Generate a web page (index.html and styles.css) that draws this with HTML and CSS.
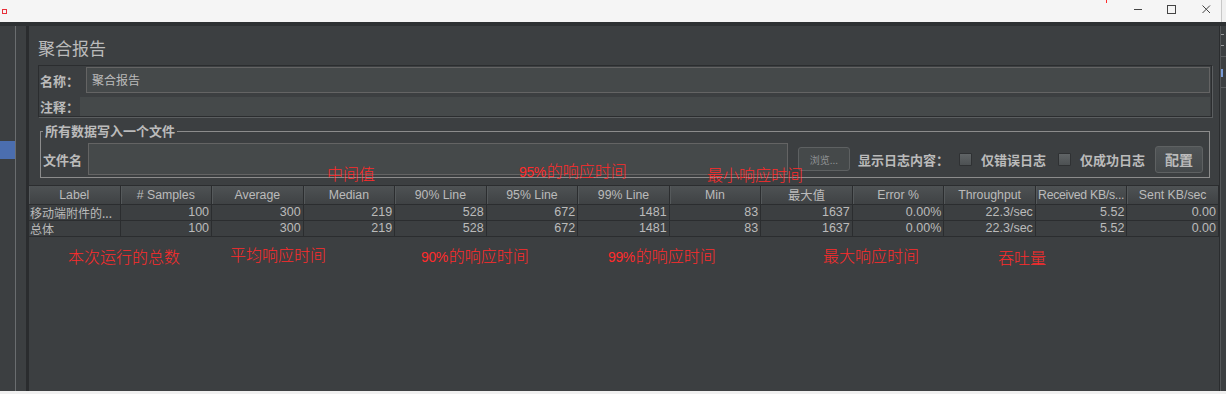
FILE: index.html
```html
<!DOCTYPE html>
<html lang="zh-CN">
<head>
    <meta charset="UTF-8">
    <title>聚合报告</title>
    <link rel="stylesheet" href="styles.css">
</head>
<body>
    <div class="titlebar">
        <span class="app-icon"></span>
        <div class="win-controls">
            <svg class="win-btn" width="10" height="10" viewBox="0 0 10 10"><line x1="1" y1="5.5" x2="9" y2="5.5"/></svg>
            <svg class="win-btn max" width="10" height="10" viewBox="0 0 10 10"><rect x="1.5" y="1.5" width="8" height="8"/></svg>
            <svg class="win-btn close" width="10" height="10" viewBox="0 0 10 10"><line x1="1.5" y1="1.5" x2="9" y2="9"/><line x1="9" y1="1.5" x2="1.5" y2="9"/></svg>
        </div>
    </div>

    <div class="workspace">
        <div class="tree">
            <div class="tree-selected"></div>
        </div>
        <div class="splitter"></div>

        <div class="main">
            <div class="config">
                <div class="panel-title">聚合报告</div>

                <div class="name-box">
                    <div class="name-row">
                        <span class="field-label name-label">名称：</span>
                        <div class="text-field">聚合报告</div>
                    </div>
                    <div class="comment-row">
                        <span class="field-label comment-label">注释：</span>
                        <div class="comment-field"></div>
                    </div>
                </div>

                <fieldset class="file-group">
                    <legend>所有数据写入一个文件</legend>
                    <div class="file-row">
                        <span class="field-label file-label">文件名</span>
                        <div class="file-field"></div>
                        <button class="browse-btn">浏览...</button>
                        <span class="field-label log-label">显示日志内容：</span>
                        <span class="check"><span class="check-box"></span>仅错误日志</span>
                        <span class="check second"><span class="check-box"></span>仅成功日志</span>
                        <button class="config-btn">配置</button>
                    </div>
                </fieldset>
            </div>

            <div class="table-pane">
                <table class="report">
                    <thead>
                        <tr>
                            <th>Label</th>
                            <th># Samples</th>
                            <th>Average</th>
                            <th>Median</th>
                            <th>90% Line</th>
                            <th>95% Line</th>
                            <th>99% Line</th>
                            <th>Min</th>
                            <th>最大值</th>
                            <th>Error %</th>
                            <th>Throughput</th>
                            <th class="tight">Received KB/s...</th>
                            <th>Sent KB/sec</th>
                        </tr>
                    </thead>
                    <tbody>
                        <tr>
                            <td class="label-cell">移动端附件的...</td>
                            <td>100</td>
                            <td>300</td>
                            <td>219</td>
                            <td>528</td>
                            <td>672</td>
                            <td>1481</td>
                            <td>83</td>
                            <td>1637</td>
                            <td>0.00%</td>
                            <td>22.3/sec</td>
                            <td>5.52</td>
                            <td>0.00</td>
                        </tr>
                        <tr>
                            <td class="label-cell">总体</td>
                            <td>100</td>
                            <td>300</td>
                            <td>219</td>
                            <td>528</td>
                            <td>672</td>
                            <td>1481</td>
                            <td>83</td>
                            <td>1637</td>
                            <td>0.00%</td>
                            <td>22.3/sec</td>
                            <td>5.52</td>
                            <td>0.00</td>
                        </tr>
                    </tbody>
                </table>
            </div>
        </div>

        <div class="side-right">
            <div class="side-mark"></div>
            <div class="side-line"></div>
            <div class="side-blue"></div>
            <div class="side-line"></div>
        </div>
    </div>
    <div class="bottom-strip"></div>

    <!-- 红色标注 -->
    <div class="notes">
        <span class="red-tick"></span>
        <span class="note" style="left: 327px; top: 165px;">中间值</span>
        <span class="note" style="left: 519px; top: 162px;"><span class="num">95%</span>的响应时间</span>
        <span class="note" style="left: 707px; top: 166px;">最小响应时间</span>
        <span class="note" style="left: 68px; top: 248px;">本次运行的总数</span>
        <span class="note" style="left: 230px; top: 246px;">平均响应时间</span>
        <span class="note" style="left: 421px; top: 247px;"><span class="num">90%</span>的响应时间</span>
        <span class="note" style="left: 608px; top: 247px;"><span class="num">99%</span>的响应时间</span>
        <span class="note" style="left: 823px; top: 247px;">最大响应时间</span>
        <span class="note" style="left: 998px; top: 249px;">吞吐量</span>
    </div>
</body>
</html>
```

FILE: styles.css
```css
body, html {
    margin: 0;
    padding: 0;
    width: 1226px;
    height: 394px;
    overflow: hidden;
    background-color: #f0f0f0;
    font-family: 'Liberation Sans', 'Noto Sans CJK SC', sans-serif;
}
body {
    position: relative;
    display: flex;
    flex-direction: column;
}
.titlebar {
    height: 22px;
    width: 1221px;
    flex-shrink: 0;
    background-color: #f5f5f5;
    border-right: 1px solid #c8c8c8;
    display: flex;
    align-items: center;
}
.app-icon {
    width: 3px;
    height: 3px;
    margin-left: 2px;
    border: 1px solid #e8303a;
}
.win-controls {
    margin-left: auto;
    margin-right: 10px;
    display: flex;
    align-items: center;
    gap: 23px;
    margin-top: -4px;
}
.win-btn {
    stroke: #444;
    stroke-width: 1;
    fill: none;
}
.win-btn.close {
    margin-left: 2px;
}
.workspace {
    height: 365px;
    flex-shrink: 0;
    border-top: 4px solid #2e3133;
    background-color: #3c3f41;
    display: flex;
}
.tree {
    width: 15px;
    border-right: 1px solid #6a6d6f;
    background-color: #3c3f41;
}
.tree-selected {
    margin-top: 115px;
    height: 18px;
    background-color: #4b6eaf;
}
.splitter {
    width: 10px;
    border-right: 3px solid #2a2c2e;
}
.main {
    width: 1190px;
    border-right: 1px solid #2a2c2e;
    display: flex;
    flex-direction: column;
}
.config {
    padding: 0 7px 0 9px;
}
.panel-title {
    margin-top: 12px;
    font-family: 'Noto Sans CJK SC', sans-serif;
    font-size: 17px;
    line-height: 20px;
    color: #bbbbbb;
}
.field-label {
    font-family: 'Noto Sans CJK SC', sans-serif;
    font-size: 13px;
    font-weight: bold;
    color: #bbbbbb;
    white-space: nowrap;
}
.name-box {
    margin-top: 7px;
    border: 1px solid #2b2d2f;
    box-shadow: 1px 1px 0 #5b5e60;
    padding: 1px 1px 0 1px;
}
.name-row, .comment-row {
    display: flex;
    align-items: center;
}
.name-label {
    width: 46px;
}
.comment-label {
    width: 40px;
}
.text-field {
    flex: 1;
    height: 24px;
    background-color: #45494a;
    border: 1px solid #646464;
    padding-left: 5px;
    font-family: 'Noto Sans CJK SC', sans-serif;
    font-size: 12px;
    line-height: 24px;
    color: #bbbbbb;
}
.comment-row {
    margin-top: 4px;
}
.comment-field {
    flex: 1;
    height: 19px;
    background-color: #45494a;
}
.file-group {
    margin: 6px 2px 7px 2px;
    padding: 4px 2px 2px 2px;
    border: 1px solid #8c8c8c;
}
.file-group legend {
    padding: 0 2px;
    font-family: 'Noto Sans CJK SC', sans-serif;
    font-size: 13px;
    font-weight: bold;
    line-height: 16px;
    color: #bbbbbb;
}
.file-row {
    display: flex;
    align-items: center;
    height: 32px;
}
.file-label {
    width: 39px;
    margin-right: 6px;
}
.file-field {
    flex: 1;
    height: 30px;
    background-color: #45494a;
    border: 1px solid #646464;
}
.browse-btn {
    margin-left: 10px;
    width: 52px;
    height: 24px;
    padding: 0;
    background-color: #45494a;
    border: 1px solid #5e6162;
    border-radius: 3px;
    font-family: 'Noto Sans CJK SC', sans-serif;
    font-size: 10px;
    color: #8f9294;
}
.log-label {
    margin-left: 8px;
    width: 91px;
}
.check {
    display: flex;
    align-items: center;
    margin-left: 10px;
    font-family: 'Noto Sans CJK SC', sans-serif;
    font-size: 13px;
    font-weight: bold;
    color: #bbbbbb;
    white-space: nowrap;
}
.check.second {
    margin-left: 12px;
}
.check-box {
    width: 11px;
    height: 11px;
    margin-right: 9px;
    border: 1px solid #2f3133;
    border-radius: 1px;
    background: linear-gradient(#606466, #4d5153);
}
.config-btn {
    margin-left: 10px;
    margin-right: 4px;
    width: 48px;
    height: 27px;
    padding: 0;
    background: linear-gradient(#505456, #45494b);
    border: 1px solid #5e6162;
    border-radius: 3px;
    font-family: 'Noto Sans CJK SC', sans-serif;
    font-size: 14px;
    font-weight: bold;
    color: #bbbbbb;
}
.table-pane {
    flex: 1;
}
.report {
    width: 1190px;
    table-layout: fixed;
    border-collapse: separate;
    border-spacing: 0;
    border-top: 1px solid #2b2d2f;
    font-size: 12.5px;
    color: #bbbbbb;
}
.report th {
    height: 16px;
    padding: 0;
    font-size: 12.3px;
    font-weight: normal;
    text-align: center;
    white-space: nowrap;
    overflow: hidden;
    background: linear-gradient(#4e5254, #3f4244);
    border-right: 1px solid #2b2d2f;
    border-bottom: 1px solid #2b2d2f;
    box-shadow: inset 1px 0 0 #55595b;
}
.report th.tight {
    letter-spacing: -0.3px;
}
.report td {
    height: 15px;
    padding: 0 2px 0 0;
    text-align: right;
    white-space: nowrap;
    overflow: hidden;
    border-right: 1px solid #2b2d2f;
    border-bottom: 1px solid #2b2d2f;
    line-height: 15px;
}
.report td.label-cell {
    text-align: left;
    padding-left: 1px;
    font-family: 'Noto Sans CJK SC', sans-serif;
    font-size: 12px;
}
.side-right {
    flex: 1;
    border-left: 1px solid #55585a;
    background-color: #3c3f41;
    overflow: hidden;
}
.side-mark {
    margin-top: 8px;
    width: 3px;
    height: 10px;
    border-top: 1px solid #9a9c9e;
    border-bottom: 1px solid #9a9c9e;
}
.side-line {
    margin-top: 10px;
    height: 1px;
    background-color: #5b5e60;
}
.side-blue {
    margin-top: 12px;
    height: 8px;
    width: 2px;
    background-color: #7a9bd6;
}
.bottom-strip {
    flex: 1;
    background-color: #f0f0f0;
}
.notes {
    position: absolute;
    top: 0;
    left: 0;
}
.note {
    position: absolute;
    font-family: 'Noto Sans CJK SC', sans-serif;
    font-size: 16px;
    font-weight: 300;
    line-height: 16px;
    color: #ff2b2b;
    white-space: nowrap;
}
.note .num {
    font-family: 'Liberation Sans', sans-serif;
    font-size: 14px;
    letter-spacing: -0.4px;
    margin-right: 1px;
}
.red-tick {
    position: absolute;
    left: 1106px;
    top: 0;
    width: 1px;
    height: 3px;
    background-color: #ff2b2b;
}
```
